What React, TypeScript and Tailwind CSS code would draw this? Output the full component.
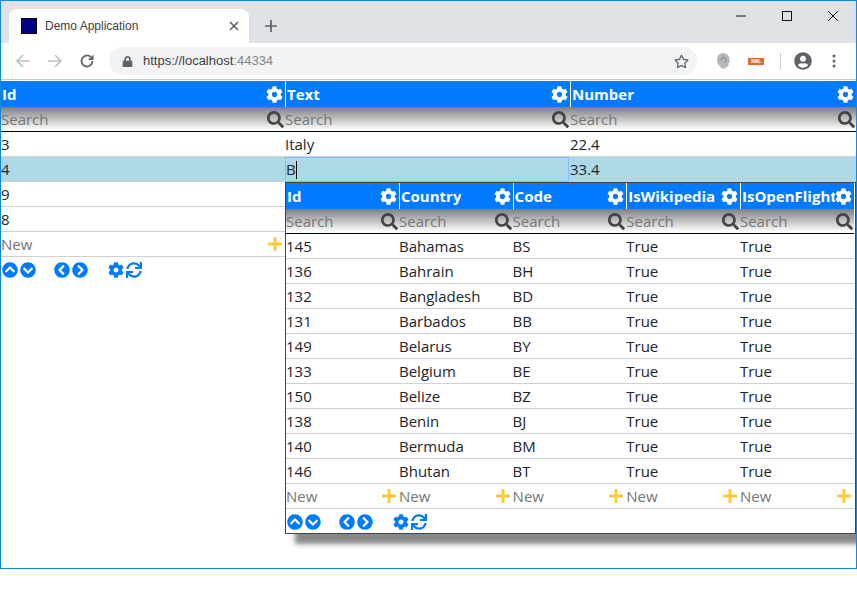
import { FaCog, FaSearch, FaPlus, FaChevronCircleUp, FaChevronCircleDown, FaChevronCircleLeft, FaChevronCircleRight, FaSync, FaUserCircle, FaLock, FaRegStar } from "react-icons/fa";

function Pager() {
  return (
    <div className="flex h-[25px] items-center text-[#007bff] text-[16px]">
      <FaChevronCircleUp className="ml-px" />
      <FaChevronCircleDown className="ml-0.5" />
      <FaChevronCircleLeft className="ml-[18px]" />
      <FaChevronCircleRight className="ml-0.5" />
      <FaCog className="ml-[20px]" />
      <FaSync className="ml-0.5" />
    </div>
  );
}

function DataGrid({ cols, widths, rows, selected, edit }: { cols: string[]; widths: string; rows: string[][]; selected?: number; edit?: boolean }) {
  return (
    <div className="w-full">
      <div className={`grid ${widths} h-[26px] bg-[#007bff] text-white font-bold text-[15px]`}>
        {cols.map((c, i) => (
          <div key={c} className={`flex items-center justify-between pl-px pr-[2px] overflow-hidden ${i ? "border-l border-white" : ""}`}>
            <span className="whitespace-nowrap overflow-hidden min-w-0">{c}</span>
            <FaCog className="shrink-0 text-[17px]" />
          </div>
        ))}
      </div>
      <div className={`grid ${widths} h-[25px] border-b border-black bg-[linear-gradient(#7f7f7f,#ffffff_95%)]`}>
        {cols.map((c) => (
          <div key={c} className="flex items-center justify-between pr-px text-[#757575] text-[15px]">
            <span>Search</span>
            <FaSearch className="text-[#444] text-[17px]" />
          </div>
        ))}
      </div>
      {rows.map((r, ri) => (
        <div key={ri} className={`grid ${widths} h-[25px] border-b border-[#d0d0d0] text-[15px] text-[#212529] ${selected === ri ? "bg-[#add8e6]" : "bg-white"}`}>
          {r.map((v, i) => (
            <div key={i} className={`flex items-center whitespace-nowrap ${edit && selected === ri && i === 1 ? "border border-[#80bdff] mr-px -mb-px" : ""}`}>
              {v}
              {edit && selected === ri && i === 1 ? <span className="w-px h-[18px] bg-black" /> : null}
            </div>
          ))}
        </div>
      ))}
      <div className={`grid ${widths} h-[25px] border-b border-[#d0d0d0] text-[15px] text-[#757575]`}>
        {cols.map((c) => (
          <div key={c} className="flex items-center justify-between pr-0.5">
            <span>New</span>
            <FaPlus className="text-[#ffc83d] text-[16px]" />
          </div>
        ))}
      </div>
    </div>
  );
}

const countries = [
  ["145", "Bahamas", "BS"], ["136", "Bahrain", "BH"], ["132", "Bangladesh", "BD"], ["131", "Barbados", "BB"], ["149", "Belarus", "BY"],
  ["133", "Belgium", "BE"], ["150", "Belize", "BZ"], ["138", "Benin", "BJ"], ["140", "Bermuda", "BM"], ["146", "Bhutan", "BT"],
].map((r) => [...r, "True", "True"]);

export default function App() {
  return (
    <div className="w-[857px] h-[600px] bg-white overflow-hidden font-['Open_Sans','Noto_Sans',sans-serif]">
      <div className="relative h-[569px] border border-[#0f87e0] overflow-hidden">
        <div className="h-[42px] bg-[#dee1e6] flex items-end relative">
          <div className="w-[240px] h-[34px] bg-white rounded-t-[8px] ml-[8px] flex items-center pl-[12px] pb-[1px] text-[12px] text-[#3c4043]">
            <div className="w-4 h-4 bg-[#000080] border border-black mr-2" />
            <span className="flex-1 font-['Liberation_Sans']">Demo Application</span>
            <svg width="10" height="10" viewBox="0 0 10 10" className="mr-[10px]"><path d="M1 1l8 8M9 1l-8 8" stroke="#5f6368" strokeWidth="1.6" /></svg>
          </div>
          <svg width="12" height="12" viewBox="0 0 12 12" className="ml-[16px] mb-[11px]"><path d="M6 0v12M0 6h12" stroke="#5f6368" strokeWidth="1.7" /></svg>
          <div className="absolute right-0 top-0 flex h-[30px] items-center">
            <div className="w-[46px] flex justify-center"><svg width="10" height="10" viewBox="0 0 10 10"><path d="M0 5h10" stroke="#111" /></svg></div>
            <div className="w-[46px] flex justify-center"><svg width="10" height="10" viewBox="0 0 10 10"><rect x=".5" y=".5" width="9" height="9" fill="none" stroke="#111" /></svg></div>
            <div className="w-[46px] flex justify-center"><svg width="10" height="10" viewBox="0 0 10 10"><path d="M0 0l10 10M10 0L0 10" stroke="#111" /></svg></div>
          </div>
        </div>
        <div className="h-[37px] bg-white border-b border-[#c8c8c8] flex items-center text-[#5f6368]">
          <svg width="16" height="16" viewBox="0 0 16 16" className="ml-[14px]"><path d="M15 8H2M8 2L2 8l6 6" fill="none" stroke="#bdc1c6" strokeWidth="1.7" /></svg>
          <svg width="16" height="16" viewBox="0 0 16 16" className="ml-[16px]"><path d="M1 8h13M8 2l6 6-6 6" fill="none" stroke="#bdc1c6" strokeWidth="1.7" /></svg>
          <svg width="16" height="16" viewBox="0 0 16 16" className="ml-[16px]"><path d="M13.5 8A5.5 5.5 0 1 1 11.8 4" fill="none" stroke="#5f6368" strokeWidth="1.8" /><path d="M14.5 1.5V7H9z" fill="#5f6368" /></svg>
          <div className="ml-[14px] w-[588px] h-[28px] rounded-full bg-[#f1f3f4] flex items-center pl-[13px] pr-[8px] text-[13px] font-['Liberation_Sans']">
            <FaLock className="text-[11px] mr-[10px]" />
            <span className="text-[#3c4043]">https://localhost</span><span className="text-[#80868b]">:44334</span>
            <FaRegStar className="ml-auto text-[15px]" />
          </div>
          <svg width="16" height="18" viewBox="0 0 16 18" className="ml-[18px]"><path d="M8 1a6.500 6.500 0 0 1 6.500 6.500c0 1.500 1 3-1 3.500v2c0 2-3 1.500-3 3.500H6c0-3-4-3-4-8.500A6 6 0 0 1 8 1z" fill="#b4b8bb" /><path d="M6 8a2.500 2.500 0 1 1 4 2" fill="none" stroke="#8b8f92" strokeWidth="1.200" /></svg>
          <div className="ml-[17px] w-4 h-[7px] bg-[#e8681e] flex items-center justify-center text-[5px] font-bold leading-none text-white font-['Liberation_Sans']">XML</div>
          <div className="ml-[16px] w-px h-[16px] bg-[#ccc]" />
          <FaUserCircle className="ml-[13px] text-[18px]" />
          <svg width="4" height="14" viewBox="0 0 4 14" className="ml-[20px]"><circle cx="2" cy="2" r="1.500" fill="#5f6368" /><circle cx="2" cy="7" r="1.500" fill="#5f6368" /><circle cx="2" cy="12" r="1.500" fill="#5f6368" /></svg>
        </div>
        <div className="pt-px">
          <DataGrid
            cols={["Id", "Text", "Number"]}
            widths="grid-cols-[284px_285px_286px]"
            rows={[["3", "Italy", "22.4"], ["4", "B", "33.4"], ["9", "", ""], ["8", "", ""]]}
            selected={1}
            edit
          />
          <Pager />
        </div>
        <div className="absolute left-[284px] top-[181px] w-[571px] h-[352px] bg-white border border-[#444] shadow-[10px_10px_5px_#888]">
          <div className="w-[568px]">
            <DataGrid
              cols={["Id", "Country", "Code", "IsWikipedia", "IsOpenFlights"]}
              widths="grid-cols-[113px_113.6px_113.7px_113.7px_114px]"
              rows={countries}
            />
          </div>
          <Pager />
        </div>
      </div>
    </div>
  );
}
